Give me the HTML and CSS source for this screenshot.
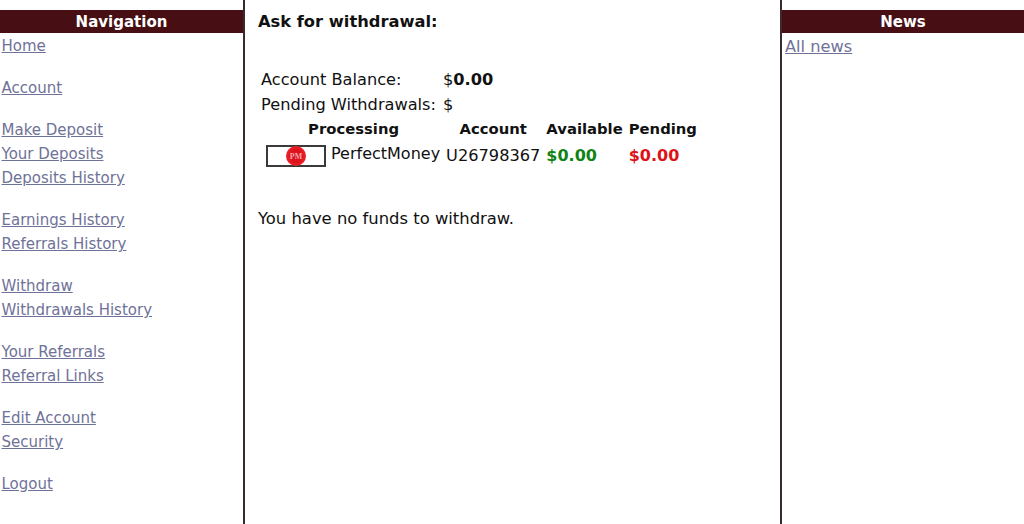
FILE: index.html
```html
<!DOCTYPE html>
<html lang="en">
<head>
    <meta charset="UTF-8">
    <title>Ask for withdrawal</title>
    <link rel="stylesheet" href="styles.css">
</head>
<body>
<div class="layout">
    <div class="side">
        <div class="side-title">Navigation</div>
        <div class="nav">
            <div class="nav-group"><a href="#">Home</a></div>
            <div class="nav-group"><a href="#">Account</a></div>
            <div class="nav-group">
                <a href="#">Make Deposit</a>
                <a href="#">Your Deposits</a>
                <a href="#">Deposits History</a>
            </div>
            <div class="nav-group">
                <a href="#">Earnings History</a>
                <a href="#">Referrals History</a>
            </div>
            <div class="nav-group">
                <a href="#">Withdraw</a>
                <a href="#">Withdrawals History</a>
            </div>
            <div class="nav-group">
                <a href="#">Your Referrals</a>
                <a href="#">Referral Links</a>
            </div>
            <div class="nav-group">
                <a href="#">Edit Account</a>
                <a href="#">Security</a>
            </div>
            <div class="nav-group"><a href="#">Logout</a></div>
        </div>
    </div>

    <div class="main">
        <h3>Ask for withdrawal:</h3>
        <table class="balance">
            <tr><td class="balance-label">Account Balance:</td><td>$<b>0.00</b></td></tr>
            <tr><td class="balance-label">Pending Withdrawals:</td><td>$</td></tr>
        </table>
        <table class="methods">
            <tr>
                <th class="processing">Processing</th>
                <th>Account</th>
                <th>Available</th>
                <th>Pending</th>
            </tr>
            <tr>
                <td>
                    <div class="method">
                        <span class="pm-box">
                            <svg width="20" height="20" viewBox="0 0 20 20">
                                <circle cx="10" cy="10" r="10" fill="#ee1c22"/>
                                <circle cx="10" cy="10" r="7.5" fill="#dc1420"/>
                                <text x="10" y="12.6" text-anchor="middle" class="pm-text">PM</text>
                            </svg>
                        </span>
                        <span class="method-name">PerfectMoney</span>
                    </div>
                </td>
                <td class="account-no">U26798367</td>
                <td class="amount available">$0.00</td>
                <td class="amount pending">$0.00</td>
            </tr>
        </table>
        <p class="notice">You have no funds to withdraw.</p>
    </div>

    <div class="side news">
        <div class="side-title">News</div>
        <a class="news-link" href="#">All news</a>
    </div>
</div>
</body>
</html>
```

FILE: styles.css
```css
html, body {
    margin: 0;
    padding: 0;
    height: 100%;
    overflow: hidden;
}
body {
    font-family: 'DejaVu Sans', sans-serif;
    font-size: 16.2px;
    color: #111;
    background: #fff;
}
.layout {
    display: grid;
    grid-template-columns: 243px 539px 1fr;
    height: 524px;
}
.side {
    padding-top: 10px;
}
.side-title {
    background-color: #470f13;
    color: #fff;
    font-size: 15px;
    font-weight: bold;
    text-align: center;
    height: 23px;
    line-height: 25px;
}
.nav {
    padding-top: 1px;
}
.nav-group {
    margin-bottom: 18px;
    padding-left: 1.5px;
    font-size: 15px;
}
.nav-group a {
    display: block;
    line-height: 24px;
}
a {
    color: #6f7298;
}
.main {
    border-left: 2px solid #3a2a2c;
    border-right: 2px solid #3a2a2c;
    padding: 0 13px;
}
.main h3 {
    font-size: 16.3px;
    margin: 12px 0 35px;
    line-height: 20px;
}
.balance, .methods {
    border-collapse: collapse;
}
.balance td {
    padding: 0 3px;
    height: 25px;
}
.balance td.balance-label {
    padding-right: 4px;
}
.methods th {
    padding: 0 3px;
    height: 22px;
    font-size: 14.8px;
}
.methods th.processing {
    padding-left: 9px;
}
.methods td {
    padding: 0 3px;
    height: 33px;
}
.method {
    display: flex;
    align-items: center;
    gap: 5px;
    padding-left: 5px;
    font-size: 16px;
}
.method-name {
    margin-bottom: 4px;
}
.pm-box {
    box-sizing: border-box;
    display: flex;
    justify-content: center;
    align-items: center;
    width: 60px;
    height: 22px;
    border: 2px solid #3a3a3a;
}
.pm-text {
    font-family: 'Liberation Serif', serif;
    font-size: 8px;
    font-weight: bold;
    fill: #f6a6a8;
}
.amount {
    font-size: 16px;
    font-weight: bold;
}
.available {
    color: #0f8412;
}
.pending {
    color: #de1217;
}
.notice {
    margin: 37px 0 0;
    font-size: 16.4px;
}
.news-link {
    display: block;
    padding-left: 3px;
    line-height: 27px;
}
```
